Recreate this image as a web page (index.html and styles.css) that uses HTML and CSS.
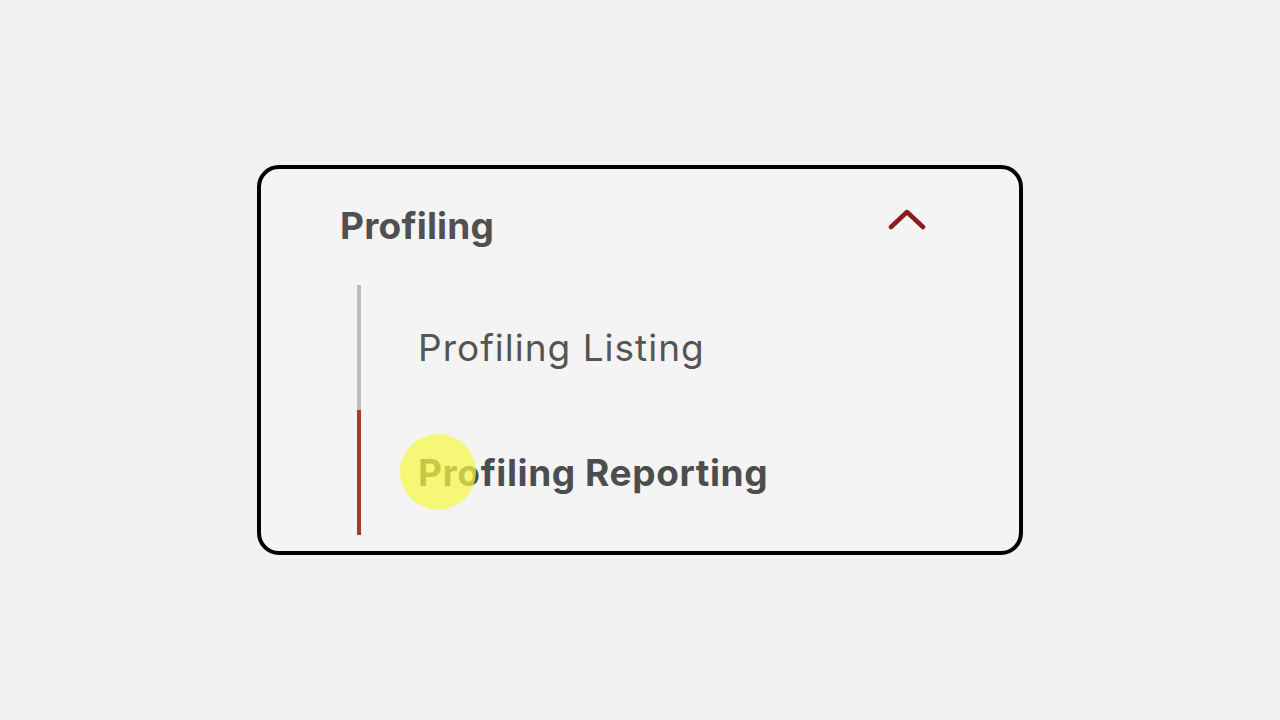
FILE: index.html
```html
<!DOCTYPE html>
<html>
<head>
<meta charset="utf-8">
<link rel="stylesheet" href="styles.css">
</head>
<body>
<div class="stage">
  <div class="card">
    <div class="header">
      <span class="title">Profiling</span>
      <svg class="chev" width="40" height="26" viewBox="0 0 40 26"><polyline points="3,20 19,5 35,20" fill="none" stroke="#8e1b1b" stroke-width="4.5" stroke-linecap="round" stroke-linejoin="round"/></svg>
    </div>
    <div class="submenu">
      <div class="item">Profiling Listing</div>
      <div class="item active">Profiling Reporting<span class="touch"></span></div>
    </div>
  </div>
</div>
</body>
</html>
```
FILE: styles.css
```css
html, body { margin: 0; padding: 0; }
body { background: #f1f1f1; font-family: Inter, "Liberation Sans", sans-serif; }
.stage { width: 1280px; height: 720px; display: flex; align-items: center; justify-content: center; }
.card {
  box-sizing: border-box; width: 766px; height: 390px;
  border: 4px solid #000; border-radius: 22px; background: #f4f4f4;
  padding: 24px 91px 0 79px;
}
.header { height: 64px; display: flex; align-items: center; justify-content: space-between; }
.title { font-size: 37px; font-weight: 700; color: #505050; letter-spacing: 0.2px; }
.chev { margin-top: -10px; }
.submenu { margin-top: 28px; margin-left: 17px; }
.item {
  position: relative; height: 125px; box-sizing: border-box;
  border-left: 4px solid #bdbdbd; padding-left: 57px;
  display: flex; align-items: center;
  font-size: 37px; color: #555; letter-spacing: 1px;
}
.item.active { border-left-color: #b0352b; font-weight: 700; color: #4d4d4d; letter-spacing: 0.6px; }
.touch {
  position: absolute; left: 39px; top: 24px; width: 76px; height: 76px;
  border-radius: 50%; background: rgba(248, 248, 70, 0.72);
}
```
